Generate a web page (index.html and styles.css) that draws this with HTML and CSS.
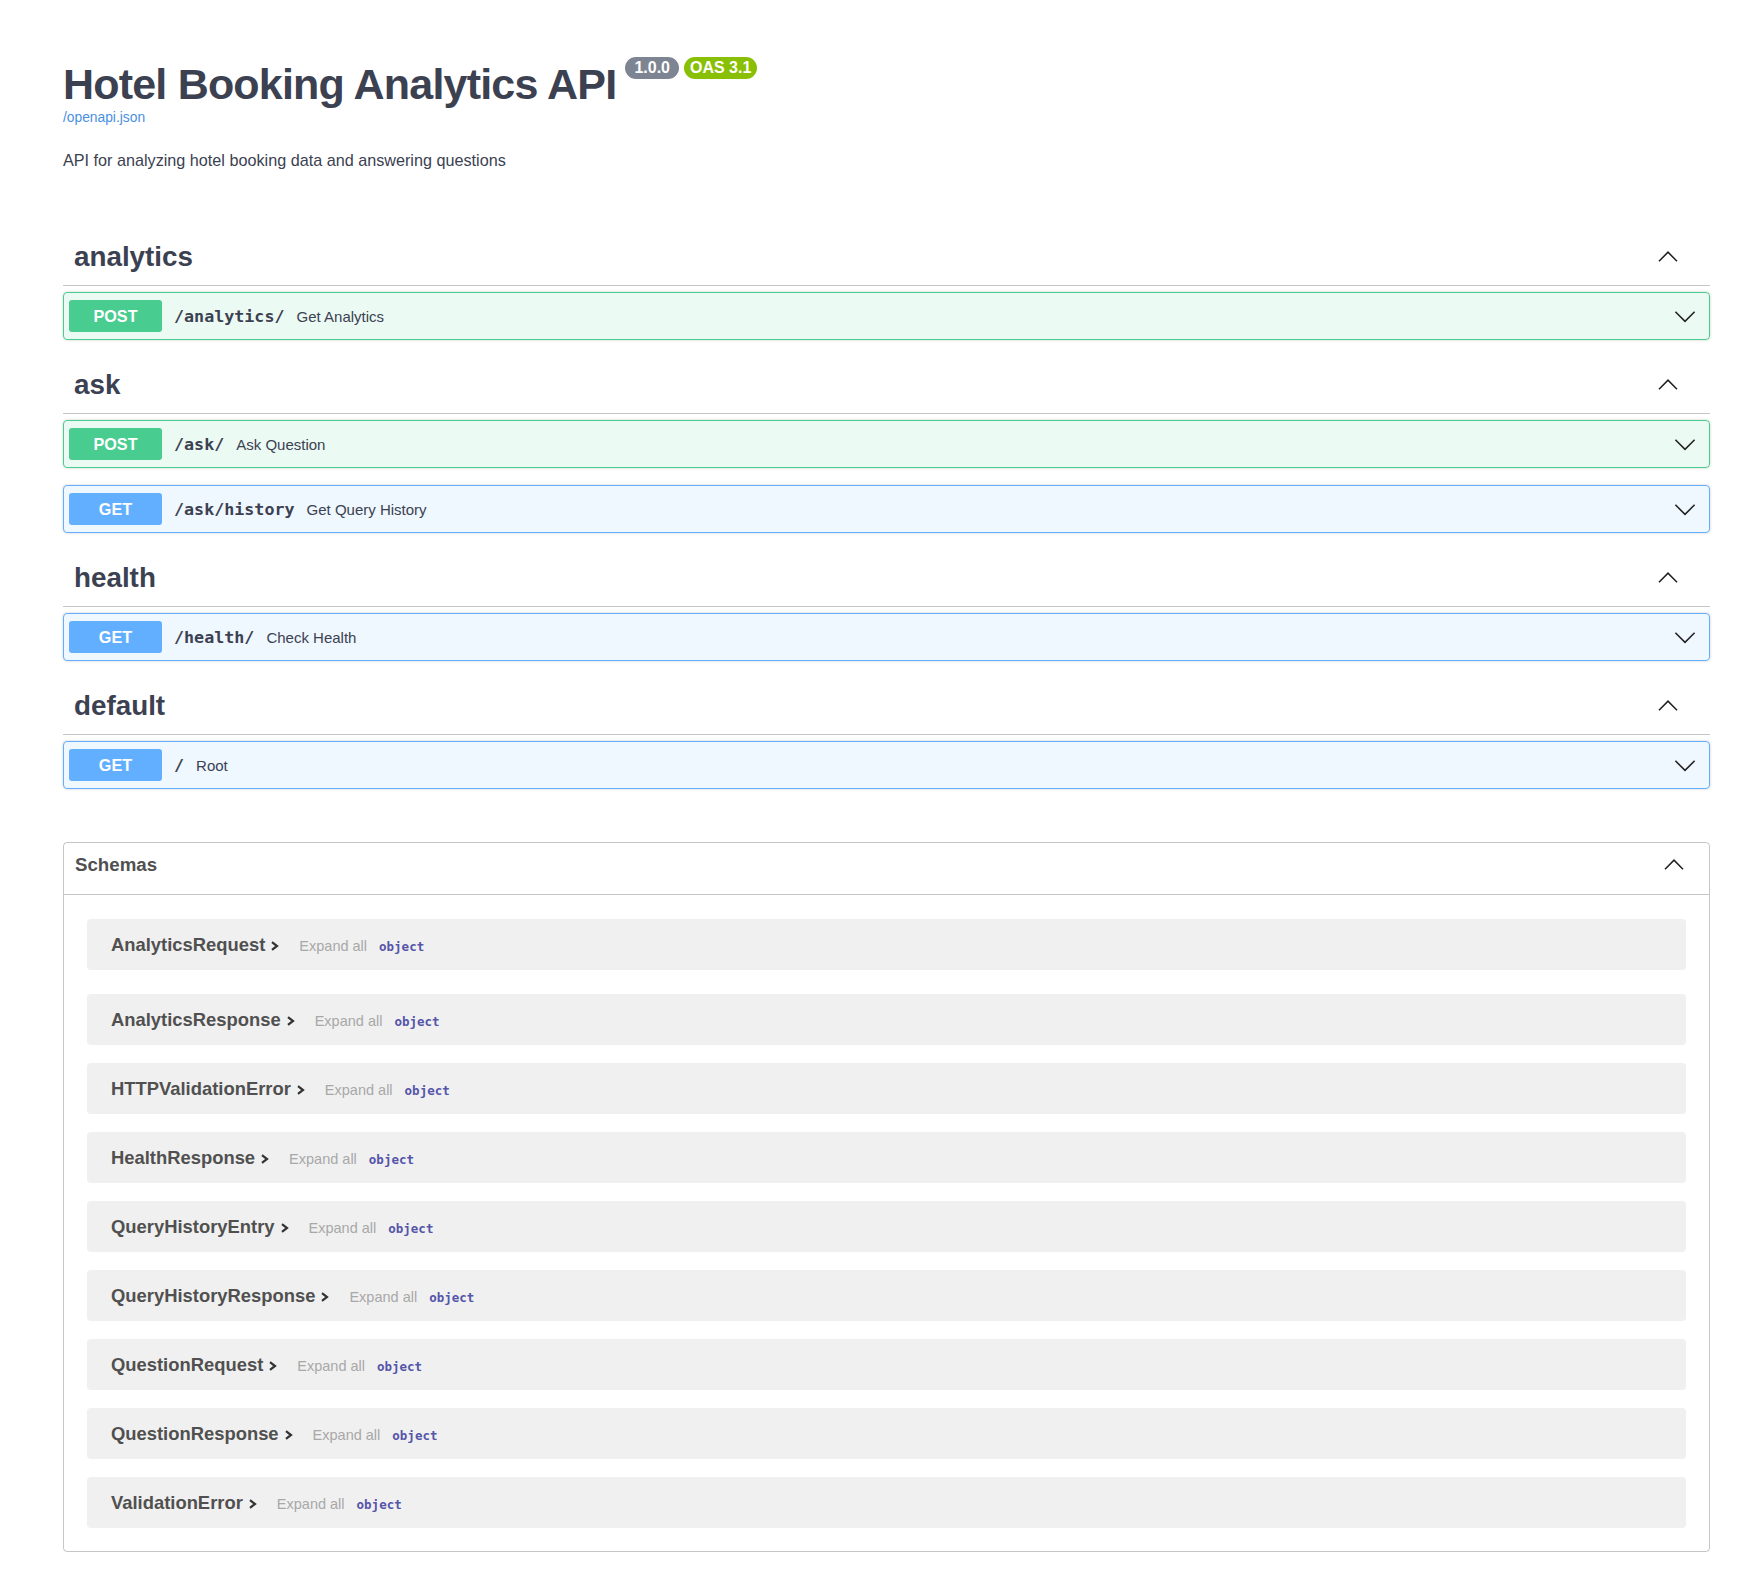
FILE: index.html
```html
<!DOCTYPE html>
<html lang="en">
<head>
<meta charset="utf-8">
<title>Hotel Booking Analytics API</title>
<link rel="stylesheet" href="styles.css">
</head>
<body>
<div class="page">
  <header class="info">
    <div class="title-row">
      <h1 class="title">Hotel Booking Analytics API</h1>
      <div class="badges"><span class="badge badge-version">1.0.0</span><span class="badge badge-oas">OAS 3.1</span></div>
    </div>
    <a class="spec-link" href="#">/openapi.json</a>
    <p class="description">API for analyzing hotel booking data and answering questions</p>
  </header>

  <div class="tag-list">
    <section class="tag-section">
      <div class="tag-header">
        <h3 class="tag-name">analytics</h3>
        <svg class="arrow" width="24" height="24" viewBox="0 0 20 20"><polyline points="2.5,13.5 10,6 17.5,13.5" fill="none" stroke="#222" stroke-width="1.3"/></svg>
      </div>
      <div class="opblock opblock-post">
        <span class="method method-post">POST</span><span class="path">/analytics/</span><span class="summary">Get Analytics</span>
        <svg class="arrow op-arrow" width="24" height="24" viewBox="0 0 20 20"><polyline points="2,6.5 10,14.5 18,6.5" fill="none" stroke="#222" stroke-width="1.3"/></svg>
      </div>
    </section>

    <section class="tag-section">
      <div class="tag-header">
        <h3 class="tag-name">ask</h3>
        <svg class="arrow" width="24" height="24" viewBox="0 0 20 20"><polyline points="2.5,13.5 10,6 17.5,13.5" fill="none" stroke="#222" stroke-width="1.3"/></svg>
      </div>
      <div class="opblock opblock-post">
        <span class="method method-post">POST</span><span class="path">/ask/</span><span class="summary">Ask Question</span>
        <svg class="arrow op-arrow" width="24" height="24" viewBox="0 0 20 20"><polyline points="2,6.5 10,14.5 18,6.5" fill="none" stroke="#222" stroke-width="1.3"/></svg>
      </div>
      <div class="opblock opblock-get">
        <span class="method method-get">GET</span><span class="path">/ask/history</span><span class="summary">Get Query History</span>
        <svg class="arrow op-arrow" width="24" height="24" viewBox="0 0 20 20"><polyline points="2,6.5 10,14.5 18,6.5" fill="none" stroke="#222" stroke-width="1.3"/></svg>
      </div>
    </section>

    <section class="tag-section">
      <div class="tag-header">
        <h3 class="tag-name">health</h3>
        <svg class="arrow" width="24" height="24" viewBox="0 0 20 20"><polyline points="2.5,13.5 10,6 17.5,13.5" fill="none" stroke="#222" stroke-width="1.3"/></svg>
      </div>
      <div class="opblock opblock-get">
        <span class="method method-get">GET</span><span class="path">/health/</span><span class="summary">Check Health</span>
        <svg class="arrow op-arrow" width="24" height="24" viewBox="0 0 20 20"><polyline points="2,6.5 10,14.5 18,6.5" fill="none" stroke="#222" stroke-width="1.3"/></svg>
      </div>
    </section>

    <section class="tag-section">
      <div class="tag-header">
        <h3 class="tag-name">default</h3>
        <svg class="arrow" width="24" height="24" viewBox="0 0 20 20"><polyline points="2.5,13.5 10,6 17.5,13.5" fill="none" stroke="#222" stroke-width="1.3"/></svg>
      </div>
      <div class="opblock opblock-get">
        <span class="method method-get">GET</span><span class="path">/</span><span class="summary">Root</span>
        <svg class="arrow op-arrow" width="24" height="24" viewBox="0 0 20 20"><polyline points="2,6.5 10,14.5 18,6.5" fill="none" stroke="#222" stroke-width="1.3"/></svg>
      </div>
    </section>
  </div>

  <section class="models">
    <div class="models-header">
      <h4 class="models-title">Schemas</h4>
      <svg class="arrow" width="24" height="24" viewBox="0 0 20 20"><polyline points="2.5,13.5 10,6 17.5,13.5" fill="none" stroke="#222" stroke-width="1.3"/></svg>
    </div>
    <div class="models-body">
      <div class="model-row"><div class="model-head"><span class="model-name">AnalyticsRequest</span><svg class="model-toggle" width="10" height="10" viewBox="0 0 10 10"><polyline points="2,1.2 7,5 2,8.8" fill="none" stroke="#333" stroke-width="2.2"/></svg><span class="expand">Expand all</span><span class="type">object</span></div></div>
      <div class="model-row"><div class="model-head"><span class="model-name">AnalyticsResponse</span><svg class="model-toggle" width="10" height="10" viewBox="0 0 10 10"><polyline points="2,1.2 7,5 2,8.8" fill="none" stroke="#333" stroke-width="2.2"/></svg><span class="expand">Expand all</span><span class="type">object</span></div></div>
      <div class="model-row"><div class="model-head"><span class="model-name">HTTPValidationError</span><svg class="model-toggle" width="10" height="10" viewBox="0 0 10 10"><polyline points="2,1.2 7,5 2,8.8" fill="none" stroke="#333" stroke-width="2.2"/></svg><span class="expand">Expand all</span><span class="type">object</span></div></div>
      <div class="model-row"><div class="model-head"><span class="model-name">HealthResponse</span><svg class="model-toggle" width="10" height="10" viewBox="0 0 10 10"><polyline points="2,1.2 7,5 2,8.8" fill="none" stroke="#333" stroke-width="2.2"/></svg><span class="expand">Expand all</span><span class="type">object</span></div></div>
      <div class="model-row"><div class="model-head"><span class="model-name">QueryHistoryEntry</span><svg class="model-toggle" width="10" height="10" viewBox="0 0 10 10"><polyline points="2,1.2 7,5 2,8.8" fill="none" stroke="#333" stroke-width="2.2"/></svg><span class="expand">Expand all</span><span class="type">object</span></div></div>
      <div class="model-row"><div class="model-head"><span class="model-name">QueryHistoryResponse</span><svg class="model-toggle" width="10" height="10" viewBox="0 0 10 10"><polyline points="2,1.2 7,5 2,8.8" fill="none" stroke="#333" stroke-width="2.2"/></svg><span class="expand">Expand all</span><span class="type">object</span></div></div>
      <div class="model-row"><div class="model-head"><span class="model-name">QuestionRequest</span><svg class="model-toggle" width="10" height="10" viewBox="0 0 10 10"><polyline points="2,1.2 7,5 2,8.8" fill="none" stroke="#333" stroke-width="2.2"/></svg><span class="expand">Expand all</span><span class="type">object</span></div></div>
      <div class="model-row"><div class="model-head"><span class="model-name">QuestionResponse</span><svg class="model-toggle" width="10" height="10" viewBox="0 0 10 10"><polyline points="2,1.2 7,5 2,8.8" fill="none" stroke="#333" stroke-width="2.2"/></svg><span class="expand">Expand all</span><span class="type">object</span></div></div>
      <div class="model-row"><div class="model-head"><span class="model-name">ValidationError</span><svg class="model-toggle" width="10" height="10" viewBox="0 0 10 10"><polyline points="2,1.2 7,5 2,8.8" fill="none" stroke="#333" stroke-width="2.2"/></svg><span class="expand">Expand all</span><span class="type">object</span></div></div>
    </div>
  </section>
</div>
</body>
</html>
```

FILE: styles.css
```css
body {
  margin: 0;
  background: #fff;
  font-family: "Liberation Sans", Arial, sans-serif;
  color: #3b4151;
}

.page {
  width: 1647px;
  margin-left: 63px;
  padding-bottom: 30px;
}

/* Info */
.title-row {
  display: flex;
  align-items: flex-start;
  padding-top: 60px;
}

.title {
  margin: 0;
  font-size: 43px;
  line-height: 48px;
  letter-spacing: -0.8px;
  font-weight: 700;
  color: #3b4151;
}

.badges {
  display: flex;
  gap: 5px;
  margin-left: 9px;
  margin-top: -3px;
}

.badge {
  height: 22px;
  line-height: 22px;
  border-radius: 11px;
  color: #fff;
  font-weight: 700;
  font-size: 16px;
}

.badge-version {
  background: #7d8492;
  padding: 0 9px;
}

.badge-oas {
  background: #89bf04;
  padding: 0 6px;
}

.spec-link {
  display: block;
  margin-top: 1px;
  font-size: 13.8px;
  line-height: 18px;
  color: #4990e2;
  text-decoration: none;
}

.description {
  margin: 22px 0 0;
  font-size: 16.2px;
  line-height: 22px;
  color: #3b4151;
}

/* Tags */
.tag-list {
  margin-top: 58px;
}

.tag-header {
  display: flex;
  align-items: center;
  justify-content: space-between;
  height: 57px;
  box-sizing: border-box;
  border-bottom: 1px solid rgba(59, 65, 81, 0.3);
  padding: 0 30px 0 11px;
  margin-bottom: 6px;
}

.tag-name {
  margin: 0;
  font-size: 27.8px;
  font-weight: 700;
  color: #3b4151;
}

.arrow {
  display: block;
  flex: none;
}

.opblock {
  display: flex;
  align-items: center;
  height: 48px;
  box-sizing: border-box;
  border: 1px solid;
  border-radius: 4px;
  padding: 0 12px 0 5px;
  margin-bottom: 17px;
  box-shadow: 0 0 3px rgba(0, 0, 0, 0.19);
}

.opblock-post {
  background: rgba(73, 204, 144, 0.1);
  border-color: #49cc90;
}

.opblock-get {
  background: rgba(97, 175, 254, 0.1);
  border-color: #61affe;
}

.method {
  width: 93px;
  height: 32px;
  line-height: 32px;
  text-align: center;
  border-radius: 3px;
  color: #fff;
  font-weight: 700;
  font-size: 16.2px;
  flex: none;
}

.method-post {
  background: #49cc90;
}

.method-get {
  background: #61affe;
}

.path {
  margin-left: 12px;
  font-family: "DejaVu Sans Mono", "Liberation Mono", monospace;
  font-weight: 700;
  font-size: 16.7px;
  color: #3b4151;
}

.summary {
  margin-left: 12px;
  font-size: 15px;
  color: #3b4151;
}

.op-arrow {
  margin-left: auto;
}

/* Models */
.models {
  margin-top: 53px;
  border: 1px solid rgba(59, 65, 81, 0.3);
  border-radius: 4px;
}

.models-header {
  display: flex;
  align-items: center;
  justify-content: space-between;
  height: 52px;
  box-sizing: border-box;
  padding: 0 23px 7px 11px;
  border-bottom: 1px solid rgba(59, 65, 81, 0.3);
}

.models-title {
  margin: 0;
  font-size: 18.7px;
  font-weight: 700;
  color: #505050;
}

.models-body {
  padding: 24px 23px 23px;
}

.model-row {
  display: flex;
  align-items: center;
  height: 51px;
  padding-left: 24px;
  background: #f0f0f0;
  border-radius: 4px;
  margin-bottom: 18px;
}

.model-row:first-child {
  margin-bottom: 24px;
}

.model-row:last-child {
  margin-bottom: 0;
}

.model-head {
  display: flex;
  align-items: baseline;
}

.model-name {
  font-size: 18.4px;
  font-weight: 700;
  color: #505050;
}

.model-toggle {
  margin-left: 5px;
  flex: none;
}

.expand {
  margin-left: 19px;
  font-size: 14.5px;
  color: #a8a8a8;
}

.type {
  margin-left: 12px;
  font-family: "DejaVu Sans Mono", "Liberation Mono", monospace;
  font-weight: 700;
  font-size: 12.5px;
  color: #55a;
}
```
